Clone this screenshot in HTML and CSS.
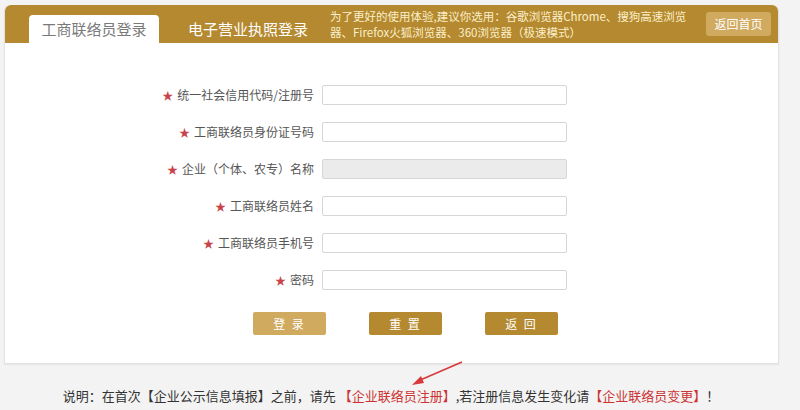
FILE: index.html
```html
<!DOCTYPE html>
<html lang="zh">
<head>
<meta charset="utf-8">
<link rel="stylesheet" href="styles.css">
</head>
<body>
<div class="page">
  <div class="card">
    <div class="header">
      <div class="tab active">工商联络员登录</div>
      <div class="tab">电子营业执照登录</div>
      <div class="notice">为了更好的使用体验,建议你选用：谷歌浏览器Chrome、搜狗高速浏览<br>器、Firefox火狐浏览器、360浏览器（极速模式）</div>
      <div class="home-btn">返回首页</div>
    </div>
    <div class="form">
      <div class="label"><span class="star">★</span>统一社会信用代码/注册号</div>
      <div class="input"></div>
      <div class="label"><span class="star">★</span>工商联络员身份证号码</div>
      <div class="input"></div>
      <div class="label"><span class="star">★</span>企业（个体、农专）名称</div>
      <div class="input disabled"></div>
      <div class="label"><span class="star">★</span>工商联络员姓名</div>
      <div class="input"></div>
      <div class="label"><span class="star">★</span>工商联络员手机号</div>
      <div class="input"></div>
      <div class="label"><span class="star">★</span>密码</div>
      <div class="input"></div>
    </div>
    <div class="actions">
      <div class="btn light">登 录</div>
      <div class="btn">重 置</div>
      <div class="btn">返 回</div>
    </div>
  </div>
  <p class="note">说明：在首次【企业公示信息填报】之前，请先 <span class="red">【企业联络员注册】</span>,若注册信息发生变化请<span class="red">【企业联络员变更】</span>！</p>
  <svg class="arrow" width="60" height="30" viewBox="0 0 60 30">
    <path d="M54 2 L10 21" stroke="#d9393a" stroke-width="1.6" fill="none"/>
    <path d="M4 25 L13 16 L16 23 Z" fill="#d9393a"/>
  </svg>
</div>
</body>
</html>
```
FILE: styles.css
```css
* { box-sizing: border-box; }
body {
  margin: 0;
  background: #f3f3f3;
  font-family: "Noto Sans CJK SC", "Noto Sans", sans-serif;
}
.page {
  position: relative;
  width: 800px;
  height: 410px;
  padding-top: 5px;
}
.card {
  margin-left: 4px;
  width: 775px;
  height: 359px;
  background: #fff;
  border: 1px solid #e2e2e2;
  border-top: none;
  border-radius: 6px 6px 0 0;
  box-shadow: 0 1px 2px rgba(0,0,0,0.06);
}
.header {
  height: 38px;
  background: #b4892f;
  border-radius: 6px 6px 0 0;
  display: flex;
  align-items: flex-end;
  padding-left: 24px;
}
.tab {
  height: 28px;
  line-height: 28px;
  font-size: 15px;
  color: #fff;
}
.tab.active {
  width: 130px;
  background: #fff;
  color: #7a7a7a;
  text-align: center;
  border-radius: 4px 4px 0 0;
  margin-right: 29px;
}
.notice {
  align-self: center;
  margin-left: 22px;
  font-size: 11.5px;
  line-height: 16px;
  color: #fbefc9;
  white-space: nowrap;
}
.home-btn {
  align-self: center;
  margin-left: auto;
  margin-right: 7px;
  width: 65px;
  height: 24px;
  line-height: 24px;
  text-align: center;
  font-size: 12px;
  color: #fff;
  background: #cfaa5f;
  border-radius: 3px;
}
.form {
  display: grid;
  grid-template-columns: 309px 245px;
  column-gap: 8px;
  row-gap: 17px;
  padding-top: 42px;
}
.label {
  height: 20px;
  line-height: 20px;
  text-align: right;
  font-size: 12px;
  color: #555;
}
.star {
  color: #c9444a;
  margin-right: 4px;
  font-size: 11px;
}
.input {
  height: 20px;
  border: 1px solid #d6d6d6;
  background: #fff;
  border-radius: 2px;
}
.input.disabled {
  background: #ebebeb;
}
.actions {
  display: flex;
  gap: 43px;
  padding-left: 248px;
  margin-top: 22px;
}
.btn {
  width: 73px;
  height: 23px;
  line-height: 23px;
  text-align: center;
  font-size: 12px;
  color: #fff;
  background: #b4892f;
  border-radius: 2px;
  letter-spacing: 2px;
}
.btn.light {
  background: #cfaa5f;
}
.note {
  margin: 22px 0 0 0;
  text-align: center;
  padding-right: 18px;
  font-size: 13px;
  color: #333;
}
.red { color: #cc3333; }
.arrow {
  position: absolute;
  left: 408px;
  top: 360px;
}
```
